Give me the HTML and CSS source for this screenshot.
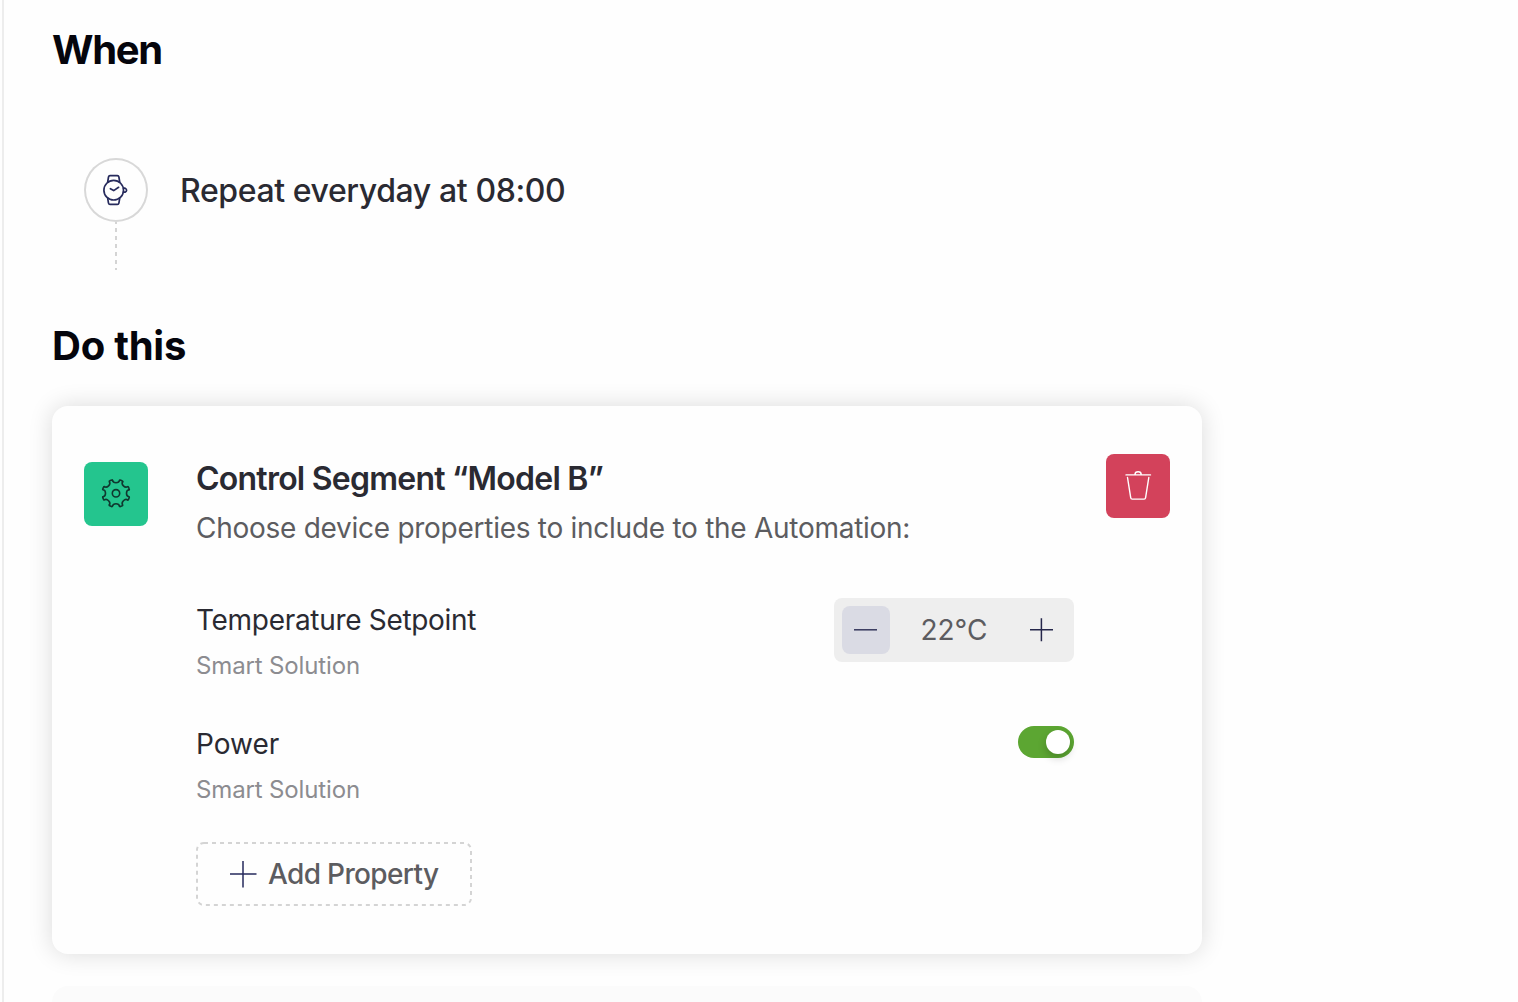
FILE: index.html
```html
<!DOCTYPE html>
<html lang="en">
<head>
<meta charset="utf-8">
<title>Automation</title>
<link rel="stylesheet" href="styles.css">
</head>
<body>
<main class="page">
  <h1 class="heading heading-when">When</h1>
  <section class="trigger">
    <div class="trigger-rail">
      <div class="trigger-icon">
        <svg width="64" height="64" viewBox="0 0 64 64" fill="none" stroke="#262a5c" stroke-width="1.7" stroke-linecap="round" stroke-linejoin="round">
          <circle cx="29.700" cy="32.200" r="9.800"/>
          <path d="M23.700 24l.8-5q.3-1.300 1.500-1.300h7.400q1.200 0 1.500 1.300l.8 5M23.700 40.400l.8 4.700q.3 1.300 1.500 1.300h7.400q1.200 0 1.500-1.300l.8-4.700M26.400 30.700l3.300 1.900 4.900-3.300M39.600 30.200h1.500q1.500.7 1.500 2t-1.500 2h-1.500"/>
        </svg>
      </div>
      <svg class="trigger-line" width="2" height="48"><path d="M1 0v48" stroke="#d4d4d4" stroke-width="2" stroke-dasharray="4 4" stroke-dashoffset="2"/></svg>
    </div>
    <p class="trigger-text">Repeat everyday at 08:00</p>
  </section>
  <h2 class="heading heading-do">Do this</h2>
  <section class="card">
    <div class="badge">
      <svg width="64" height="64" viewBox="-32 -31.300 64 64" fill="none" stroke="#10382f" stroke-width="1.6" stroke-linecap="round" stroke-linejoin="round">
        <circle r="3.700"/>
        <path id="tooth" d="M-3.500 -12.900C-2.900 -9.700 2.900 -9.700 3.500 -12.900Q3.800 -13.500 4.400 -13.200L6.300 -12.400Q6.900 -12.200 6.650 -11.600"/>
        <use href="#tooth" transform="rotate(45)"/>
        <use href="#tooth" transform="rotate(90)"/>
        <use href="#tooth" transform="rotate(135)"/>
        <use href="#tooth" transform="rotate(180)"/>
        <use href="#tooth" transform="rotate(225)"/>
        <use href="#tooth" transform="rotate(270)"/>
        <use href="#tooth" transform="rotate(315)"/>
      </svg>
    </div>
    <div class="card-body">
      <h3 class="card-title">Control Segment “Model B”</h3>
      <p class="card-subtitle">Choose device properties to include to the Automation:</p>
      <div class="property">
        <div class="property-label">
          <p class="property-name name-temperature">Temperature Setpoint</p>
          <p class="property-source">Smart Solution</p>
        </div>
        <div class="stepper">
          <button class="step step-minus" aria-label="Decrease"><svg width="48" height="48"><path d="M12 23.800h23" stroke="#35375c" stroke-width="1.5"/></svg></button>
          <span class="stepper-value">22°C</span>
          <button class="step" aria-label="Increase"><svg width="48" height="48"><path d="M12 23.800h23M23.400 12.300v23" stroke="#24264a" stroke-width="1.5"/></svg></button>
        </div>
      </div>
      <div class="property">
        <div class="property-label label-power">
          <p class="property-name name-power">Power</p>
          <p class="property-source">Smart Solution</p>
        </div>
        <button class="toggle" aria-label="Power"><span class="toggle-knob"></span></button>
      </div>
      <button class="add">
        <svg width="28" height="28"><path d="M1 14h26.500M14 1v26.500" stroke="#262a5c" stroke-width="1.5"/></svg>
        <span class="add-text">Add Property</span>
        <svg class="add-border" width="276" height="64" fill="none"><rect x="1" y="1" width="274" height="62" rx="7" stroke="#d4d4d4" stroke-width="2" stroke-dasharray="4 4"/></svg>
      </button>
    </div>
    <button class="delete" aria-label="Delete">
      <svg width="64" height="64" viewBox="0 0 64 64" fill="none" stroke="#fff" stroke-width="1.4" stroke-linecap="round" stroke-linejoin="round">
        <path d="M20 20.900h24.500M29 20.500q0-2.700 3.100-2.700t3.100 2.700M21.500 23.500l3.200 20.100q.2 1.500 1.500 1.500h11.900q1.300 0 1.500-1.500l3.200-20.100"/>
      </svg>
    </button>
  </section>
  <section class="card-next"></section>
</main>
</body>
</html>
```

FILE: styles.css
```css
* { box-sizing: border-box; margin: 0; padding: 0; }
body {
  height: 1002px;
  overflow: hidden;
  background: #fefefe;
  font-family: Inter, "Liberation Sans", sans-serif;
  color: #2a2a32;
}
button { border: 0; background: none; font: inherit; color: inherit; }
svg { display: block; flex: none; }
.page {
  height: 1002px;
  margin-left: 2px;
  padding: 30px 0 0 48px;
  border-left: 2px solid #ededed;
  white-space: nowrap;
  overflow: hidden;
}
.heading { font-size: 40px; line-height: 40px; font-weight: 700; color: #05050c; }
.heading-when { letter-spacing: -1.3px; }
.heading-do { margin-top: 56px; letter-spacing: -0.25px; }
.trigger { display: flex; gap: 32px; margin: 88px 0 0 32px; }
.trigger-rail { display: flex; flex-direction: column; align-items: center; }
.trigger-icon { width: 64px; height: 64px; border-radius: 50%; box-shadow: inset 0 0 0 2px #d8d8d8; background: #fefefe; }
.trigger-text { font-size: 32px; line-height: 66px; font-weight: 500; letter-spacing: -0.4px; }
.card {
  display: flex;
  width: 1150px;
  height: 548px;
  margin-top: 40px;
  padding: 48px 32px;
  border-radius: 16px;
  background: #fefefe;
  box-shadow: 0 0 24px rgba(0, 0, 0, 0.14);
}
.badge { width: 64px; height: 64px; margin-top: 8px; border-radius: 8px; background: #24c58e; }
.card-body { width: 878px; margin-left: 48px; }
.card-title { margin-top: 5px; font-size: 32px; line-height: 40px; font-weight: 600; letter-spacing: -0.76px; }
.card-subtitle { margin-top: 11px; font-size: 28px; line-height: 36px; letter-spacing: -0.27px; color: #5c5c60; }
.property { display: flex; justify-content: space-between; height: 64px; margin-top: 52px; }
.property + .property { margin-top: 64px; }
.property-name { font-size: 28px; line-height: 45px; }
.name-temperature { letter-spacing: -0.31px; }
.label-power { margin-top: -4px; }
.property-source { margin-top: 5px; font-size: 24px; line-height: 36px; letter-spacing: -0.14px; color: #8c8c90; }
.stepper { display: flex; align-items: center; justify-content: space-between; width: 240px; height: 64px; padding: 8px; border-radius: 8px; background: #eee; }
.step { width: 48px; height: 48px; border-radius: 8px; }
.step-minus { background: #dadbe4; }
.stepper-value { font-size: 28px; line-height: 48px; color: #5c5c60; }
.toggle { display: flex; justify-content: flex-end; width: 56px; height: 32px; padding: 4px; border-radius: 16px; background: #5ca632; }
.toggle-knob { width: 24px; height: 24px; border-radius: 50%; background: #fff; box-shadow: 0 4px 8px rgba(0, 0, 0, 0.2); }
.add { position: relative; display: flex; align-items: center; width: 276px; height: 64px; margin-top: 52px; padding-left: 33px; }
.add-text { margin-left: 11px; font-size: 28px; font-weight: 500; letter-spacing: -0.65px; color: #5c5c60; }
.add-border { position: absolute; inset: 0; }
.delete { width: 64px; height: 64px; margin-left: auto; border-radius: 8px; background: #d3425b; }
.card-next { width: 1150px; height: 80px; margin-top: 32px; border-radius: 16px; background: #fbfbfb; }
```
